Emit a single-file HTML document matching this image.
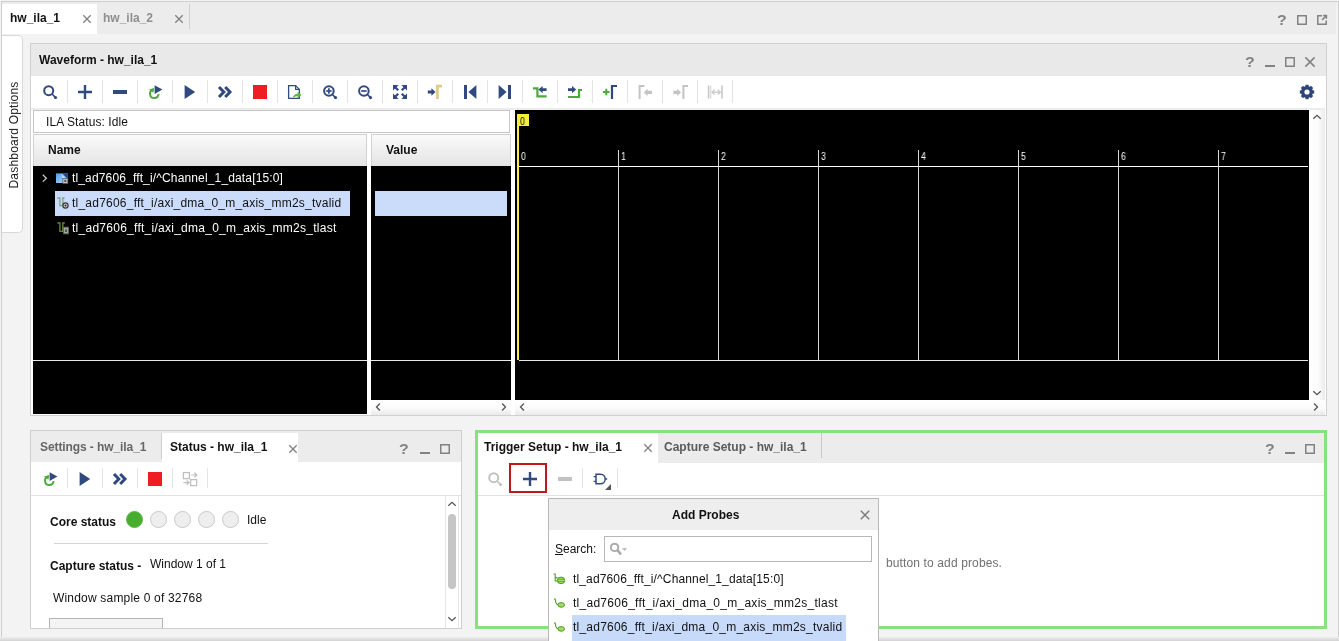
<!DOCTYPE html>
<html>
<head>
<meta charset="utf-8">
<title>hw_ila_1</title>
<style>
*{box-sizing:border-box;margin:0;padding:0}
html,body{width:1339px;height:641px;overflow:hidden;background:#f3f3f3;font-family:"Liberation Sans",sans-serif;font-size:12px;color:#111}
.a{position:absolute}
.t{position:absolute;white-space:nowrap;line-height:14px;font-size:12px;will-change:transform}
.b{font-weight:bold}
svg{position:absolute;overflow:visible}
</style>
</head>
<body>

<div class="a" style="left:0px;top:0px;width:1339px;height:641px;background:#f3f3f3"></div>
<div class="a" style="left:1px;top:1px;width:1338px;height:637px;border:1px solid #cfcfcf;background:#f3f3f3"></div>
<div class="a" style="left:0px;top:637px;width:1339px;height:4px;background:linear-gradient(#eeeeee,#d2d2d2)"></div>
<div class="a" style="left:2px;top:2px;width:1334px;height:32px;background:#ececec"></div>
<div class="a" style="left:2px;top:4px;width:95px;height:30px;background:#fff"></div>
<div class="t b" style="left:10px;top:11px;">hw_ila_1</div>
<div class="t b" style="left:103px;top:11px;color:#8e8e8e">hw_ila_2</div>
<div class="a" style="left:189px;top:4px;width:1px;height:25px;background:#cfcfcf"></div>
<svg style="left:81px;top:13.2px" width="12" height="12" viewBox="0 0 12 12"><path d="M2.3 2.3L9.7 9.7M9.7 2.3L2.3 9.7" stroke="#808080" stroke-width="1.3"/></svg>
<svg style="left:173px;top:13.2px" width="12" height="12" viewBox="0 0 12 12"><path d="M2.3 2.3L9.7 9.7M9.7 2.3L2.3 9.7" stroke="#808080" stroke-width="1.3"/></svg>
<div class="t" style="left:1277px;top:12px;font-size:14px;font-weight:bold;color:#828282;line-height:16px;width:10px;text-align:center;transform:scaleX(1.14)">?</div>
<svg style="left:1297px;top:15px" width="10" height="10" viewBox="0 0 10 10"><rect x="0.75" y="0.75" width="8.5" height="8.5" fill="none" stroke="#828282" stroke-width="1.5"/></svg>
<svg style="left:1317px;top:15px" width="10" height="10" viewBox="0 0 10 10"><path d="M5 0.8H0.8V9.2H9.2V5.4" fill="none" stroke="#828282" stroke-width="1.5"/><path d="M5 5L9.4 0.6M6.2 0.6H9.4V3.8" fill="none" stroke="#828282" stroke-width="1.5"/></svg>
<div class="a" style="left:2px;top:35px;width:21px;height:198px;background:#fff;border:1px solid #d8d8d8;border-left:none;border-radius:0 5px 5px 0"></div>
<div class="t" style="left:-41.3px;top:128.4px;letter-spacing:0.213px;width:110px;text-align:center;transform:rotate(-90deg);color:#222">Dashboard Options</div>
<div class="a" style="left:30px;top:43px;width:1297px;height:373px;background:#fff;border:1px solid #d0d0d0"></div>
<div class="a" style="left:31px;top:44px;width:1295px;height:32px;background:#e9e9e9"></div>
<div class="a" style="left:31px;top:108px;width:1294px;height:2px;background:#ececec"></div>
<div class="t b" style="left:39px;top:53px;">Waveform - hw_ila_1</div>
<div class="t" style="left:1245px;top:54px;font-size:14px;font-weight:bold;color:#828282;line-height:16px;width:10px;text-align:center;transform:scaleX(1.14)">?</div>
<div class="a" style="left:1265px;top:65px;width:10px;height:2px;background:#828282"></div>
<svg style="left:1285px;top:57px" width="10" height="10" viewBox="0 0 10 10"><rect x="0.75" y="0.75" width="8.5" height="8.5" fill="none" stroke="#828282" stroke-width="1.5"/></svg>
<svg style="left:1304px;top:56.3px" width="12" height="12" viewBox="0 0 12 12"><path d="M1.4000000000000004 1.4000000000000004L10.6 10.6M10.6 1.4000000000000004L1.4000000000000004 10.6" stroke="#828282" stroke-width="1.5"/></svg>
<svg style="left:40px;top:82px" width="20" height="20" viewBox="0 0 20 20"><circle cx="8.7" cy="8.7" r="4.5" fill="none" stroke="#304a80" stroke-width="2"/><path d="M12 12L15.8 15.8" stroke="#304a80" stroke-width="1.6"/><circle cx="15.5" cy="15.5" r="1.6" fill="#304a80"/></svg>
<div class="a" style="left:67px;top:80px;width:1px;height:23px;background:#e4e4e4"></div>
<svg style="left:75px;top:82px" width="20" height="20" viewBox="0 0 20 20"><path d="M3 10H17M10 3V17" stroke="#304a80" stroke-width="2.4"/></svg>
<div class="a" style="left:102px;top:80px;width:1px;height:23px;background:#e4e4e4"></div>
<svg style="left:110px;top:82px" width="20" height="20" viewBox="0 0 20 20"><path d="M3 10H17" stroke="#304a80" stroke-width="4"/></svg>
<div class="a" style="left:137px;top:80px;width:1px;height:23px;background:#e4e4e4"></div>
<svg style="left:145px;top:82px" width="20" height="20" viewBox="0 0 20 20"><path d="M8.2 7.6A4.3 4.3 0 1 0 13.6 12.2" fill="none" stroke="#4caa3c" stroke-width="2"/><path d="M4 7.4L9.2 6L8.4 10.8Z" fill="#4caa3c"/><path d="M9.6 3.2L17.4 7.6L9.6 12Z" fill="#304a80"/></svg>
<div class="a" style="left:172px;top:80px;width:1px;height:23px;background:#e4e4e4"></div>
<svg style="left:180px;top:82px" width="20" height="20" viewBox="0 0 20 20"><path d="M4.6 3L15.2 10L4.6 17Z" fill="#304a80"/></svg>
<div class="a" style="left:207px;top:80px;width:1px;height:23px;background:#e4e4e4"></div>
<svg style="left:215px;top:82px" width="20" height="20" viewBox="0 0 20 20"><path d="M4 5L8.8 10L4 15M10.2 5L15 10L10.2 15" fill="none" stroke="#304a80" stroke-width="3" stroke-linejoin="miter"/></svg>
<div class="a" style="left:242px;top:80px;width:1px;height:23px;background:#e4e4e4"></div>
<svg style="left:250px;top:82px" width="20" height="20" viewBox="0 0 20 20"><rect x="3" y="3" width="14" height="14" fill="#ee1c24"/></svg>
<div class="a" style="left:277px;top:80px;width:1px;height:23px;background:#e4e4e4"></div>
<svg style="left:285px;top:82px" width="20" height="20" viewBox="0 0 20 20"><g transform="translate(-1 0)"><path d="M4.6 3.6H11.6L15.4 7.4V16.4H4.6Z" fill="#fff" stroke="#304a80" stroke-width="1.3"/><path d="M11.6 3.6V7.4H15.4" fill="none" stroke="#304a80" stroke-width="1.1"/><path d="M8.6 16.2C9.4 12.8 11.4 11.8 13.6 11.8V9.8L17.6 13L13.6 16.2V14.2C11.6 14.2 10 14.6 8.6 16.2Z" fill="#5cb84c"/></g></svg>
<div class="a" style="left:312px;top:80px;width:1px;height:23px;background:#e4e4e4"></div>
<svg style="left:320px;top:82px" width="20" height="20" viewBox="0 0 20 20"><circle cx="8.9" cy="9" r="4.8" fill="none" stroke="#304a80" stroke-width="2"/><path d="M12.4 12.5L15.8 15.9" stroke="#304a80" stroke-width="1.6"/><circle cx="15.5" cy="15.6" r="1.6" fill="#304a80"/><path d="M6.2 9H11.6" stroke="#304a80" stroke-width="1.7"/><path d="M8.9 6.3V11.7" stroke="#304a80" stroke-width="1.7"/></svg>
<div class="a" style="left:347px;top:80px;width:1px;height:23px;background:#e4e4e4"></div>
<svg style="left:355px;top:82px" width="20" height="20" viewBox="0 0 20 20"><circle cx="8.9" cy="9" r="4.8" fill="none" stroke="#304a80" stroke-width="2"/><path d="M12.4 12.5L15.8 15.9" stroke="#304a80" stroke-width="1.6"/><circle cx="15.5" cy="15.6" r="1.6" fill="#304a80"/><path d="M6.2 9H11.6" stroke="#304a80" stroke-width="1.7"/></svg>
<div class="a" style="left:382px;top:80px;width:1px;height:23px;background:#e4e4e4"></div>
<svg style="left:390px;top:82px" width="20" height="20" viewBox="0 0 20 20"><path d="M3 3H8.6L3 8.6Z M17 3H11.4L17 8.6Z M3 17H8.6L3 11.4Z M17 17H11.4L17 11.4Z" fill="#304a80"/><path d="M4.5 4.5L8.2 8.2M15.5 4.5L11.8 8.2M4.5 15.5L8.2 11.8M15.5 15.5L11.8 11.8" stroke="#304a80" stroke-width="2.3"/></svg>
<div class="a" style="left:417px;top:80px;width:1px;height:23px;background:#e4e4e4"></div>
<svg style="left:425px;top:82px" width="20" height="20" viewBox="0 0 20 20"><path d="M2.8 8.4H6.4V6.2L10.6 10L6.4 13.8V11.6H2.8Z" fill="#304a80"/><path d="M12.4 17V4.2H17" fill="none" stroke="#e0cc8a" stroke-width="2.8"/></svg>
<div class="a" style="left:452px;top:80px;width:1px;height:23px;background:#e4e4e4"></div>
<svg style="left:460px;top:82px" width="20" height="20" viewBox="0 0 20 20"><rect x="4" y="3" width="3" height="14" fill="#304a80"/><path d="M16.4 3L8.4 10L16.4 17Z" fill="#304a80"/></svg>
<div class="a" style="left:487px;top:80px;width:1px;height:23px;background:#e4e4e4"></div>
<svg style="left:495px;top:82px" width="20" height="20" viewBox="0 0 20 20"><rect x="13" y="3" width="3" height="14" fill="#304a80"/><path d="M3.6 3L11.6 10L3.6 17Z" fill="#304a80"/></svg>
<div class="a" style="left:522px;top:80px;width:1px;height:23px;background:#e4e4e4"></div>
<svg style="left:530px;top:82px" width="20" height="20" viewBox="0 0 20 20"><path d="M3 6.4H7.4V14.4H16.6" fill="none" stroke="#4caa3c" stroke-width="2.2"/><path d="M16.6 6.2H12.6V4L8.4 7.6L12.6 11.2V9H16.6Z" fill="#304a80"/></svg>
<div class="a" style="left:557px;top:80px;width:1px;height:23px;background:#e4e4e4"></div>
<svg style="left:565px;top:82px" width="20" height="20" viewBox="0 0 20 20"><path d="M3 15H14V8H17" fill="none" stroke="#4caa3c" stroke-width="2.2"/><path d="M3 6.2H7V4L11.2 7.6L7 11.2V9H3Z" fill="#304a80"/></svg>
<div class="a" style="left:592px;top:80px;width:1px;height:23px;background:#e4e4e4"></div>
<svg style="left:600px;top:82px" width="20" height="20" viewBox="0 0 20 20"><path d="M3 10H9.6M6.3 6.7V13.3" stroke="#4caa3c" stroke-width="2"/><path d="M12 17V4H17" fill="none" stroke="#304a80" stroke-width="2.2"/></svg>
<div class="a" style="left:627px;top:80px;width:1px;height:23px;background:#e4e4e4"></div>
<svg style="left:635px;top:82px" width="20" height="20" viewBox="0 0 20 20"><path d="M4.6 17V4H9.4" fill="none" stroke="#c4c4c4" stroke-width="2"/><path d="M17 8.8H12.6V6.8L8.8 10.4L12.6 14V12H17Z" fill="#c4c4c4"/></svg>
<div class="a" style="left:662px;top:80px;width:1px;height:23px;background:#e4e4e4"></div>
<svg style="left:670px;top:82px" width="20" height="20" viewBox="0 0 20 20"><path d="M13.4 17V4H18" fill="none" stroke="#c4c4c4" stroke-width="2"/><path d="M3.4 8.8H7.2V6.8L11 10.4L7.2 14V12H3.4Z" fill="#c4c4c4"/></svg>
<div class="a" style="left:697px;top:80px;width:1px;height:23px;background:#e4e4e4"></div>
<svg style="left:705px;top:82px" width="20" height="20" viewBox="0 0 20 20"><path d="M3.6 3.6V16.6M17 3.6V16.6" stroke="#c8c8c8" stroke-width="1.6"/><path d="M5.8 3.6V16.6" stroke="#c8c8c8" stroke-width="0.8"/><path d="M7.4 10.2H15" stroke="#c8c8c8" stroke-width="1.3"/><path d="M9.6 7.8L7 10.2L9.6 12.6M12.8 7.8L15.4 10.2L12.8 12.6" fill="none" stroke="#c8c8c8" stroke-width="1.2"/></svg>
<div class="a" style="left:732px;top:80px;width:1px;height:23px;background:#e4e4e4"></div>
<svg style="left:1297px;top:82px" width="20" height="20" viewBox="0 0 20 20"><circle cx="10" cy="10" r="4.3" fill="none" stroke="#2e4578" stroke-width="3.4"/><rect x="8.4" y="2.8" width="3.2" height="3.4" fill="#2e4578" transform="rotate(0 10 10)"/><rect x="8.4" y="2.8" width="3.2" height="3.4" fill="#2e4578" transform="rotate(45 10 10)"/><rect x="8.4" y="2.8" width="3.2" height="3.4" fill="#2e4578" transform="rotate(90 10 10)"/><rect x="8.4" y="2.8" width="3.2" height="3.4" fill="#2e4578" transform="rotate(135 10 10)"/><rect x="8.4" y="2.8" width="3.2" height="3.4" fill="#2e4578" transform="rotate(180 10 10)"/><rect x="8.4" y="2.8" width="3.2" height="3.4" fill="#2e4578" transform="rotate(225 10 10)"/><rect x="8.4" y="2.8" width="3.2" height="3.4" fill="#2e4578" transform="rotate(270 10 10)"/><rect x="8.4" y="2.8" width="3.2" height="3.4" fill="#2e4578" transform="rotate(315 10 10)"/></svg>
<div class="a" style="left:33px;top:110px;width:477px;height:23px;background:#fff;border:1px solid #c6c6c6"></div>
<div class="t" style="left:46.2px;top:115px;letter-spacing:0.077px;">ILA Status: Idle</div>
<div class="a" style="left:33px;top:134px;width:334px;height:32px;background:linear-gradient(#fafafa,#e4e4e4);border:1px solid #d0d0d0;border-bottom:none"></div>
<div class="t b" style="left:48px;top:143px;">Name</div>
<div class="a" style="left:371px;top:134px;width:140px;height:32px;background:linear-gradient(#fafafa,#e4e4e4);border:1px solid #d0d0d0;border-bottom:none"></div>
<div class="t b" style="left:386px;top:143px;">Value</div>
<div class="a" style="left:33px;top:166px;width:334px;height:248px;background:#000"></div>
<div class="a" style="left:371px;top:166px;width:140px;height:234px;background:#000"></div>
<div class="a" style="left:515px;top:110px;width:794px;height:290px;background:#000"></div>
<div class="a" style="left:55px;top:191px;width:295px;height:25px;background:#cbdcfb"></div>
<div class="a" style="left:375px;top:191px;width:132px;height:25px;background:#cbdcfb"></div>
<div class="t" style="left:72.3px;top:171px;letter-spacing:0.149px;color:#fff">tl_ad7606_fft_i/^Channel_1_data[15:0]</div>
<div class="t" style="left:72.3px;top:196px;letter-spacing:0.229px;color:#111">tl_ad7606_fft_i/axi_dma_0_m_axis_mm2s_tvalid</div>
<div class="t" style="left:72.3px;top:221px;letter-spacing:0.262px;color:#fff">tl_ad7606_fft_i/axi_dma_0_m_axis_mm2s_tlast</div>
<svg style="left:41px;top:173px" width="8" height="10" viewBox="0 0 8 10"><path d="M1.8 1.8L5.4 5.2L1.8 8.6" fill="none" stroke="#d0d0d0" stroke-width="1.2"/></svg>
<svg style="left:56px;top:172px" width="13" height="12" viewBox="0 0 13 12"><defs><linearGradient id="bg1" x1="0" y1="0" x2="1" y2="1"><stop offset="0" stop-color="#4f9de6"/><stop offset="1" stop-color="#b4dcff"/></linearGradient></defs><rect x="0" y="1.4" width="11.8" height="9.6" fill="url(#bg1)"/><path d="M6.4 1.4H11.8V7Z" fill="#1d3f78"/><path d="M5.4 1.4L9 6.4L11.8 7V11H7.6Z" fill="#dbeeff" opacity=".75"/><rect x="6.8" y="6.4" width="5" height="5" fill="#c8c8c8" stroke="#5a5a5a" stroke-width="0.8"/><circle cx="9.3" cy="8.9" r="1.2" fill="#555"/></svg>
<svg style="left:57px;top:197px" width="13" height="13" viewBox="0 0 13 13"><path d="M0.4 1H2.9V8.6H5.8V1H7.6" fill="none" stroke="#82a08c" stroke-width="1.3"/><circle cx="8.5" cy="8.5" r="2.6" fill="#cfcfcf" stroke="#383838" stroke-width="1.2"/><circle cx="8.5" cy="8.5" r="1" fill="#2a2a2a"/></svg>
<svg style="left:57px;top:222px" width="13" height="13" viewBox="0 0 13 13"><path d="M0.4 1H2.9V9.4H5.8V1H7.8" fill="none" stroke="#64843e" stroke-width="1.4"/><rect x="6.6" y="5.2" width="4.8" height="6.6" fill="#9eae9e" stroke="#646464" stroke-width="0.9"/><rect x="8" y="7.4" width="2" height="2.6" fill="#505050"/></svg>
<div class="a" style="left:33px;top:360px;width:334px;height:1px;background:#e8e8e8"></div>
<div class="a" style="left:371px;top:360px;width:140px;height:1px;background:#e8e8e8"></div>
<div class="a" style="left:519px;top:360px;width:789px;height:1px;background:#e8e8e8"></div>
<div class="a" style="left:519px;top:166px;width:789px;height:1px;background:#fff"></div>
<div class="a" style="left:618px;top:150px;width:1px;height:210px;background:#d8d8d8"></div>
<div class="t" style="left:621px;top:151px;font-size:10px;color:#fff;line-height:12px;transform:scaleX(.87);transform-origin:0 0">1</div>
<div class="a" style="left:718px;top:150px;width:1px;height:210px;background:#d8d8d8"></div>
<div class="t" style="left:721px;top:151px;font-size:10px;color:#fff;line-height:12px;transform:scaleX(.87);transform-origin:0 0">2</div>
<div class="a" style="left:818px;top:150px;width:1px;height:210px;background:#d8d8d8"></div>
<div class="t" style="left:821px;top:151px;font-size:10px;color:#fff;line-height:12px;transform:scaleX(.87);transform-origin:0 0">3</div>
<div class="a" style="left:918px;top:150px;width:1px;height:210px;background:#d8d8d8"></div>
<div class="t" style="left:921px;top:151px;font-size:10px;color:#fff;line-height:12px;transform:scaleX(.87);transform-origin:0 0">4</div>
<div class="a" style="left:1018px;top:150px;width:1px;height:210px;background:#d8d8d8"></div>
<div class="t" style="left:1021px;top:151px;font-size:10px;color:#fff;line-height:12px;transform:scaleX(.87);transform-origin:0 0">5</div>
<div class="a" style="left:1118px;top:150px;width:1px;height:210px;background:#d8d8d8"></div>
<div class="t" style="left:1121px;top:151px;font-size:10px;color:#fff;line-height:12px;transform:scaleX(.87);transform-origin:0 0">6</div>
<div class="a" style="left:1218px;top:150px;width:1px;height:210px;background:#d8d8d8"></div>
<div class="t" style="left:1221px;top:151px;font-size:10px;color:#fff;line-height:12px;transform:scaleX(.87);transform-origin:0 0">7</div>
<div class="t" style="left:520.6px;top:151px;font-size:10px;color:#fff;line-height:12px;transform:scaleX(.87);transform-origin:0 0">0</div>
<div class="a" style="left:517px;top:126px;width:2px;height:234px;background:#f4f03c"></div>
<div class="a" style="left:517px;top:114px;width:12px;height:12px;background:#f4f03c"></div>
<div class="t" style="left:519.6px;top:116px;font-size:10px;color:#111;line-height:12px;transform:scaleX(.87);transform-origin:0 0">0</div>
<div class="a" style="left:371px;top:400px;width:140px;height:15px;background:linear-gradient(#fff 0%,#fbfbfb 55%,#e9e9e9 100%)"></div>
<svg style="left:378px;top:407px" width="1" height="1" viewBox="0 0 1 1"><path d="M1.9 -3.5L-1.5 0L1.9 3.5" fill="none" stroke="#555" stroke-width="1.3"/></svg>
<svg style="left:504px;top:407px" width="1" height="1" viewBox="0 0 1 1"><path d="M-1.9 -3.5L1.5 0L-1.9 3.5" fill="none" stroke="#555" stroke-width="1.3"/></svg>
<div class="a" style="left:515px;top:400px;width:810px;height:15px;background:linear-gradient(#fff 0%,#fbfbfb 55%,#e9e9e9 100%)"></div>
<svg style="left:522px;top:407px" width="1" height="1" viewBox="0 0 1 1"><path d="M1.9 -3.5L-1.5 0L1.9 3.5" fill="none" stroke="#555" stroke-width="1.3"/></svg>
<svg style="left:1316px;top:407px" width="1" height="1" viewBox="0 0 1 1"><path d="M-1.9 -3.5L1.5 0L-1.9 3.5" fill="none" stroke="#555" stroke-width="1.3"/></svg>
<div class="a" style="left:1309px;top:110px;width:16px;height:290px;background:linear-gradient(90deg,#fff 0%,#fbfbfb 60%,#ebebeb 100%)"></div>
<svg style="left:1317px;top:117px" width="1" height="1" viewBox="0 0 1 1"><path d="M-3.7 1.7L0 -1.7L3.7 1.7" fill="none" stroke="#555" stroke-width="1.3"/></svg>
<svg style="left:1317px;top:393px" width="1" height="1" viewBox="0 0 1 1"><path d="M-3.7 -1.7L0 1.7L3.7 -1.7" fill="none" stroke="#555" stroke-width="1.3"/></svg>
<div class="a" style="left:30px;top:430px;width:432px;height:199px;background:#fff;border:1px solid #cecece"></div>
<div class="a" style="left:31px;top:431px;width:430px;height:31px;background:#ececec"></div>
<div class="a" style="left:162px;top:433px;width:136px;height:29px;background:#fff"></div>
<div class="a" style="left:161px;top:433px;width:1px;height:26px;background:#cfcfcf"></div>
<div class="t b" style="left:40px;top:440px;color:#666;letter-spacing:-0.09px">Settings - hw_ila_1</div>
<div class="t b" style="left:170px;top:440px;">Status - hw_ila_1</div>
<svg style="left:286.5px;top:442.5px" width="12" height="12" viewBox="0 0 12 12"><path d="M2.3 2.3L9.7 9.7M9.7 2.3L2.3 9.7" stroke="#808080" stroke-width="1.3"/></svg>
<div class="t" style="left:399px;top:441px;font-size:14px;font-weight:bold;color:#828282;line-height:16px;width:10px;text-align:center;transform:scaleX(1.14)">?</div>
<div class="a" style="left:420px;top:452px;width:10px;height:2px;background:#828282"></div>
<svg style="left:440px;top:444px" width="10" height="10" viewBox="0 0 10 10"><rect x="0.75" y="0.75" width="8.5" height="8.5" fill="none" stroke="#828282" stroke-width="1.5"/></svg>
<svg style="left:40px;top:469px" width="20" height="20" viewBox="0 0 20 20"><path d="M8.2 7.6A4.3 4.3 0 1 0 13.6 12.2" fill="none" stroke="#4caa3c" stroke-width="2"/><path d="M4 7.4L9.2 6L8.4 10.8Z" fill="#4caa3c"/><path d="M9.6 3.2L17.4 7.6L9.6 12Z" fill="#304a80"/></svg>
<div class="a" style="left:67px;top:468px;width:1px;height:20px;background:#e4e4e4"></div>
<svg style="left:75px;top:469px" width="20" height="20" viewBox="0 0 20 20"><path d="M4.6 3L15.2 10L4.6 17Z" fill="#304a80"/></svg>
<div class="a" style="left:102px;top:468px;width:1px;height:20px;background:#e4e4e4"></div>
<svg style="left:110px;top:469px" width="20" height="20" viewBox="0 0 20 20"><path d="M4 5L8.8 10L4 15M10.2 5L15 10L10.2 15" fill="none" stroke="#304a80" stroke-width="3" stroke-linejoin="miter"/></svg>
<div class="a" style="left:137px;top:468px;width:1px;height:20px;background:#e4e4e4"></div>
<svg style="left:145px;top:469px" width="20" height="20" viewBox="0 0 20 20"><rect x="3" y="3" width="14" height="14" fill="#ee1c24"/></svg>
<div class="a" style="left:172px;top:468px;width:1px;height:20px;background:#e4e4e4"></div>
<svg style="left:180px;top:469px" width="20" height="20" viewBox="0 0 20 20"><rect x="3.4" y="3.6" width="6" height="6" fill="none" stroke="#c0c0c0" stroke-width="1.3"/><rect x="10.6" y="10.6" width="6" height="6" fill="none" stroke="#c0c0c0" stroke-width="1.3"/><path d="M11.2 6H16.6M14.4 3.8L16.8 6L14.4 8.2" fill="none" stroke="#c0c0c0" stroke-width="1.2"/><path d="M3.4 13.6H8.6M6.6 11.4L9 13.6L6.6 15.8" fill="none" stroke="#c0c0c0" stroke-width="1.2"/></svg>
<div class="a" style="left:207px;top:468px;width:1px;height:20px;background:#e4e4e4"></div>
<div class="a" style="left:31px;top:495px;width:430px;height:1px;background:#e2e2e2"></div>
<div class="t b" style="left:50px;top:515px;">Core status</div>
<div class="a" style="left:126px;top:511px;width:17px;height:17px;border-radius:50%;background:#48ac30;border:1px solid #5cba48"></div>
<div class="a" style="left:150px;top:511px;width:17px;height:17px;border-radius:50%;background:#eeeeee;border:1px solid #c8c8c8"></div>
<div class="a" style="left:174px;top:511px;width:17px;height:17px;border-radius:50%;background:#eeeeee;border:1px solid #c8c8c8"></div>
<div class="a" style="left:198px;top:511px;width:17px;height:17px;border-radius:50%;background:#eeeeee;border:1px solid #c8c8c8"></div>
<div class="a" style="left:222px;top:511px;width:17px;height:17px;border-radius:50%;background:#eeeeee;border:1px solid #c8c8c8"></div>
<div class="t" style="left:247px;top:513px;">Idle</div>
<div class="a" style="left:54px;top:543px;width:214px;height:1px;background:#d4d4d4"></div>
<div class="t b" style="left:50px;top:559px;">Capture status -</div>
<div class="t" style="left:150px;top:557px;">Window 1 of 1</div>
<div class="t" style="left:53.3px;top:591px;letter-spacing:0.191px;">Window sample 0 of 32768</div>
<div class="a" style="left:49px;top:618px;width:114px;height:10px;background:#f4f4f4;border:1px solid #b4b4b4;border-bottom:none"></div>
<div class="a" style="left:445px;top:496px;width:1px;height:132px;background:#e6e6e6"></div>
<div class="a" style="left:458px;top:496px;width:1px;height:132px;background:#e6e6e6"></div>
<div class="a" style="left:448px;top:514px;width:8px;height:75px;background:#c6c6c6;border-radius:4px"></div>
<svg style="left:452px;top:504px" width="1" height="1" viewBox="0 0 1 1"><path d="M-3.7 1.7L0 -1.7L3.7 1.7" fill="none" stroke="#555" stroke-width="1.3"/></svg>
<svg style="left:452px;top:619px" width="1" height="1" viewBox="0 0 1 1"><path d="M-3.7 -1.7L0 1.7L3.7 -1.7" fill="none" stroke="#555" stroke-width="1.3"/></svg>
<div class="a" style="left:475px;top:430px;width:852px;height:199px;background:#fff;border:3px solid #88e07e"></div>
<div class="a" style="left:478px;top:433px;width:846px;height:29.5px;background:#ececec"></div>
<div class="a" style="left:478px;top:433px;width:180px;height:30px;background:#fff"></div>
<div class="t b" style="left:484px;top:440px;">Trigger Setup - hw_ila_1</div>
<svg style="left:641.8px;top:442px" width="12" height="12" viewBox="0 0 12 12"><path d="M2.3 2.3L9.7 9.7M9.7 2.3L2.3 9.7" stroke="#808080" stroke-width="1.3"/></svg>
<div class="t b" style="left:664px;top:440px;color:#5a5a5a">Capture Setup - hw_ila_1</div>
<div class="a" style="left:820.5px;top:433px;width:1px;height:25px;background:#c8c8c8"></div>
<div class="t" style="left:1265px;top:441px;font-size:14px;font-weight:bold;color:#828282;line-height:16px;width:10px;text-align:center;transform:scaleX(1.14)">?</div>
<div class="a" style="left:1285px;top:452px;width:10px;height:2px;background:#828282"></div>
<svg style="left:1305px;top:444px" width="10" height="10" viewBox="0 0 10 10"><rect x="0.75" y="0.75" width="8.5" height="8.5" fill="none" stroke="#828282" stroke-width="1.5"/></svg>
<svg style="left:485px;top:468.6px" width="20" height="20" viewBox="0 0 20 20"><circle cx="8.7" cy="8.7" r="4.5" fill="none" stroke="#c2c2c2" stroke-width="2"/><path d="M12 12L15.8 15.8" stroke="#c2c2c2" stroke-width="1.6"/><circle cx="15.5" cy="15.5" r="1.6" fill="#c2c2c2"/></svg>
<div class="a" style="left:509px;top:463px;width:38px;height:30px;border:2px solid #c2161e"></div>
<svg style="left:520px;top:469px" width="20" height="20" viewBox="0 0 20 20"><path d="M3 10H17M10 3V17" stroke="#304a80" stroke-width="2.4"/></svg>
<svg style="left:555px;top:469px" width="20" height="20" viewBox="0 0 20 20"><path d="M3 10H17" stroke="#c2c2c2" stroke-width="4"/></svg>
<div class="a" style="left:582px;top:468px;width:1px;height:20px;background:#e4e4e4"></div>
<svg style="left:590px;top:469px" width="20" height="20" viewBox="0 0 20 20"><path d="M6 5.2H10.4A4.8 4.8 0 0 1 10.4 14.8H6Z" fill="none" stroke="#304a80" stroke-width="1.5"/><path d="M3.6 7.6H6M3.6 12.4H6M15.2 10H17.2" stroke="#304a80" stroke-width="1.4"/></svg>
<svg style="left:605px;top:484px" width="6" height="6" viewBox="0 0 6 6"><path d="M6 0V6H0Z" fill="#555"/></svg>
<div class="a" style="left:617px;top:468px;width:1px;height:20px;background:#e4e4e4"></div>
<div class="a" style="left:478px;top:495px;width:846px;height:1px;background:#e2e2e2"></div>
<div class="t" style="left:886.3px;top:556px;letter-spacing:0.126px;color:#707070">button to add probes.</div>
<div class="a" style="left:548px;top:498px;width:331px;height:150px;background:#fff;border:1px solid #b8b8b8"></div>
<div class="a" style="left:549px;top:499px;width:329px;height:31px;background:#eeeeee"></div>
<div class="t b" style="left:672px;top:508px;">Add Probes</div>
<svg style="left:858.8px;top:509px" width="12" height="12" viewBox="0 0 12 12"><path d="M1.7999999999999998 1.7999999999999998L10.2 10.2M10.2 1.7999999999999998L1.7999999999999998 10.2" stroke="#7a7a7a" stroke-width="1.4"/></svg>
<div class="t" style="left:555px;top:542px;"><span style="text-decoration:underline">S</span>earch:</div>
<div class="a" style="left:604px;top:536px;width:268px;height:26px;background:#fff;border:1px solid #b8b8b8"></div>
<svg style="left:609px;top:542px" width="20" height="14" viewBox="0 0 20 14"><circle cx="5.6" cy="5.4" r="3.7" fill="none" stroke="#acacac" stroke-width="2"/><path d="M8.6 8.4L11.4 11.6" stroke="#acacac" stroke-width="2.6" stroke-linecap="round"/><path d="M13 6.2H18L15.5 8.8Z" fill="#acacac"/></svg>
<div class="a" style="left:572px;top:615px;width:274px;height:26px;background:#c8dafa"></div>
<div class="t" style="left:573.2px;top:572px;letter-spacing:0.138px;">tl_ad7606_fft_i/^Channel_1_data[15:0]</div>
<div class="t" style="left:573.2px;top:596px;letter-spacing:0.269px;">tl_ad7606_fft_i/axi_dma_0_m_axis_mm2s_tlast</div>
<div class="t" style="left:573.2px;top:620px;letter-spacing:0.229px;">tl_ad7606_fft_i/axi_dma_0_m_axis_mm2s_tvalid</div>
<svg style="left:553px;top:573px" width="12" height="12" viewBox="0 0 12 12"><path d="M0.6 1H2.2V8H4.4M2.2 4.6H4.4" fill="none" stroke="#4c9a28" stroke-width="1.1"/><ellipse cx="8" cy="7.4" rx="3.7" ry="3.3" fill="#a4dc68" stroke="#4c9c24" stroke-width="1"/><path d="M4.6 6.3H11.4M4.6 8.5H11.4" stroke="#55a52c" stroke-width="0.8"/></svg>
<svg style="left:553px;top:597.8px" width="12" height="12" viewBox="0 0 12 12"><path d="M0.8 1H2.2C2.6 4 2.6 6.4 5 6.6" fill="none" stroke="#4c9a28" stroke-width="1.1"/><ellipse cx="8.2" cy="6.9" rx="3.3" ry="2.3" fill="#a4dc68" stroke="#4c9c24" stroke-width="1"/></svg>
<svg style="left:553px;top:621.8px" width="12" height="12" viewBox="0 0 12 12"><path d="M0.8 1H2.2C2.6 4 2.6 6.4 5 6.6" fill="none" stroke="#4c9a28" stroke-width="1.1"/><ellipse cx="8.2" cy="6.9" rx="3.3" ry="2.3" fill="#a4dc68" stroke="#4c9c24" stroke-width="1"/></svg>
</body>
</html>
